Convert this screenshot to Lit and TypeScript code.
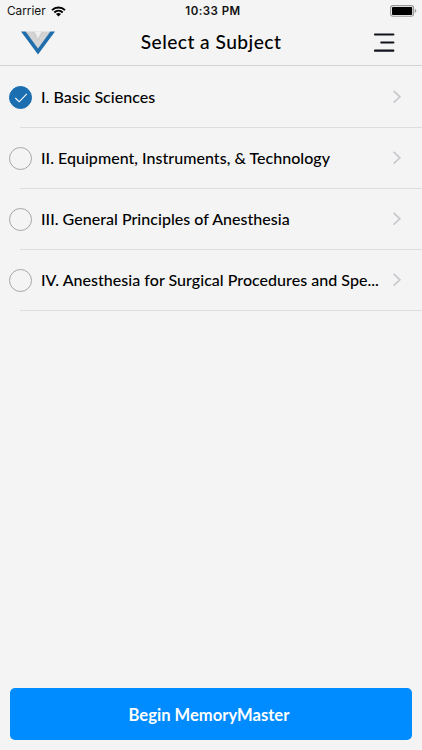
import { LitElement, html, css } from "lit";
import { customElement, property, state } from "lit/decorators.js";
import { classMap } from "lit/directives/class-map.js";

const SUBJECTS: string[] = [
  "I. Basic Sciences",
  "II. Equipment, Instruments, & Technology",
  "III. General Principles of Anesthesia",
  "IV. Anesthesia for Surgical Procedures and Spe...",
];

@customElement("status-bar")
class StatusBar extends LitElement {
  static styles = css`
    :host {
      display: grid;
      grid-template-columns: 1fr auto 1fr;
      align-items: center;
      height: 21px;
      padding: 0 5px 0 7px;
      box-sizing: border-box;
      font: 12px/21px Inter, "Liberation Sans", sans-serif;
      color: #111;
    }
    .left { display: flex; align-items: center; gap: 5px; }
    .carrier { padding-top: 1px; font-size: 11.8px; }
    .time { font-weight: 600; font-size: 11.5px; letter-spacing: 0.45px; padding: 1px 0 0 2px; }
    .battery { justify-self: end; }
    svg { display: block; }
  `;
  render() {
    return html`
      <div class="left">
        <span class="carrier">Carrier</span>
        <svg width="15" height="11" viewBox="0 0 15 11">
          <path d="M1 4.2C4.6 .5 10.4 .5 14 4.2M3.3 6.5C5.7 4.2 9.3 4.2 11.7 6.5" fill="none" stroke="#000" stroke-width="1.9" />
          <path d="M5 8.1Q7.5 6.1 10 8.1L7.5 10.6Z" />
        </svg>
      </div>
      <span class="time">10:33 PM</span>
      <svg class="battery" width="27" height="12" viewBox="0 0 27 12">
        <rect x=".6" y=".6" width="23" height="10.6" rx="2.5" fill="none" stroke="#999" stroke-width="1.1" />
        <rect x="2" y="1.9" width="20.2" height="8" rx="1" />
        <path d="M24.8 4C26.8 4.3 26.8 7.5 24.8 7.8Z" fill="#999" />
      </svg>
    `;
  }
}

@customElement("subject-row")
class SubjectRow extends LitElement {
  @property() label = "";
  @property({ type: Boolean }) selected = false;

  static styles = css`
    :host { display: block; height: 61px; }
    .row { display: flex; height: 61px; padding-left: 9px; }
    .mark {
      flex: none;
      box-sizing: border-box;
      width: 23px;
      height: 23px;
      margin: 20px 9px 0 0;
      border: 1px solid #a6a6a8;
      border-radius: 50%;
    }
    .mark.on { background: #1b6eaf; border-color: #1b6eaf; }
    .mark svg { display: block; }
    .label {
      flex: 1;
      padding-top: 20px;
      font: 500 16px/22px Lato, "Open Sans", sans-serif;
      letter-spacing: 0.03px;
      color: #000;
      white-space: nowrap;
    }
    .chevron { flex: none; margin: 24px 20px 0 0; }
    .line { height: 1px; margin-left: 20px; background: #dddde0; }
  `;
  render() {
    return html`
      <div class="row">
        <div class=${classMap({ mark: true, on: this.selected })}>
          ${this.selected
            ? html`<svg width="21" height="21" viewBox="0 0 21 21">
                <path d="M5.3 11L9.2 14.8L16.8 6.8" fill="none" stroke="#fff" stroke-width="1.1" />
              </svg>`
            : ""}
        </div>
        <div class="label">${this.label}</div>
        <svg class="chevron" width="10" height="14" viewBox="0 0 10 14">
          <path d="M1.6 .9L7.9 6.8L1.6 12.7" fill="none" stroke="#c7c7cc" stroke-width="1.6" />
        </svg>
      </div>
      <div class="line"></div>
    `;
  }
}

@customElement("app-root")
class AppRoot extends LitElement {
  @state() private current = 0;

  static styles = css`
    :host {
      display: flex;
      flex-direction: column;
      height: 750px;
      background: #f4f4f4;
    }
    .header {
      display: grid;
      grid-template-columns: 1fr auto 1fr;
      box-sizing: border-box;
      height: 45px;
      border-bottom: 1px solid #d2d2d4;
    }
    .logo { display: block; margin: 10px 0 0 20px; }
    .title {
      margin: 0;
      padding-top: 8px;
      font: 500 19.2px/26px Lato, "Open Sans", sans-serif;
      letter-spacing: 0.45px;
      color: #000;
    }
    .menu { justify-self: end; margin: 12px 27px 0 0; }
    .list { flex: 1; }
    .begin {
      box-sizing: border-box;
      height: 52px;
      margin: 0 10px 10px;
      border: 0;
      border-radius: 5px;
      background: #008bff;
      color: #fff;
      font: 700 16.6px/50px Lato, "Open Sans", sans-serif;
      padding: 2px 4px 0 0;
    }
  `;
  render() {
    return html`
      <status-bar></status-bar>
      <header class="header">
        <svg class="logo" width="36" height="24" viewBox="0 0 36 24">
          <path d="M5 .6H31L18 18Z" fill="#cfcfd0" />
          <path d="M14.5 .6H21.5L18 7.6Z" fill="#f0f0f0" />
          <path d="M8 .6L18 15.6L28 .6M10.6 .6L18 12.4L25.4 .6" fill="none" stroke="#e0e0e0" stroke-width=".6" />
          <path d="M1 .4H5.6L18 17.4L30.4 .4H35L18 23.4Z" fill="#206dac" />
        </svg>
        <h1 class="title">Select a Subject</h1>
        <svg class="menu" width="22" height="20" viewBox="0 0 22 20">
          <path d="M2 1.5H20.3M8.3 9.5H20.3M2 17.7H20.3" stroke="#11131c" stroke-width="2.2" stroke-linecap="round" />
        </svg>
      </header>
      <main class="list">
        ${SUBJECTS.map(
          (label, i) => html`<subject-row
            .label=${label}
            ?selected=${i === this.current}
            @click=${() => (this.current = i)}
          ></subject-row>`
        )}
      </main>
      <button class="begin">Begin MemoryMaster</button>
    `;
  }
}
